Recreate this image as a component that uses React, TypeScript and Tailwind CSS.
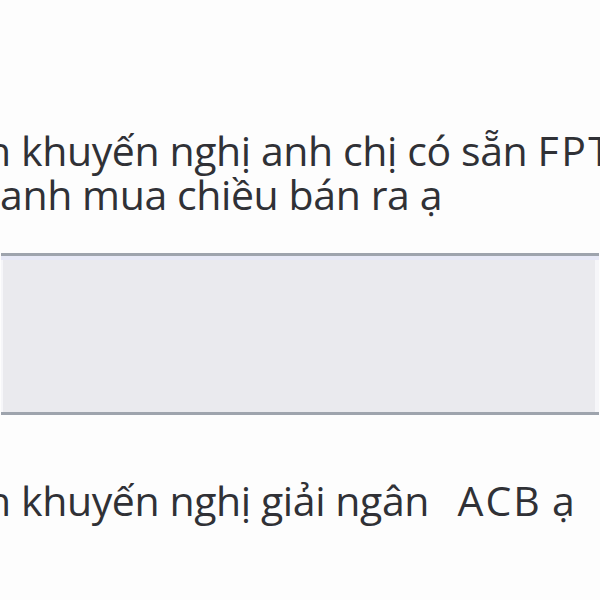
export default function App() {
  return (
    <div
      className="w-[600px] h-[600px] overflow-hidden bg-[#fdfdfd] flex flex-col text-[#303136]"
      style={{ fontFamily: '"Open Sans", "Noto Sans", sans-serif' }}
    >
      <div className="h-[128px] shrink-0" />
      <div className="flex flex-col text-[41px] leading-[44px] whitespace-nowrap tracking-[-0.4px]">
        <div className="ml-[-14px]">
          n khuyến nghị anh chị có sẵn <span className="tracking-[2.5px]">FPT</span>
        </div>
        <div className="ml-[0px]">anh mua chiều bán ra ạ</div>
      </div>
      <div className="h-[37px] shrink-0" />
      <div className="h-[162px] shrink-0 mx-[1px] border-t-[3px] border-b-[3px] border-[#9ea4ad] bg-[#eaeaee] flex flex-col">
        <div className="h-[4px] bg-[#e7e9f6]" />
        <div className="flex-1 border-l-[2px] border-r-[4px] border-[#f6f6f9]" />
      </div>
      <div className="h-[62px] shrink-0" />
      <div className="text-[41px] leading-[46px] whitespace-nowrap ml-[-14px] tracking-[-0.4px]">
        n khuyến nghị giải ngân&nbsp;&nbsp;
        <span className="ml-[8px] tracking-[2px]">ACB</span> ạ
      </div>
    </div>
  );
}
